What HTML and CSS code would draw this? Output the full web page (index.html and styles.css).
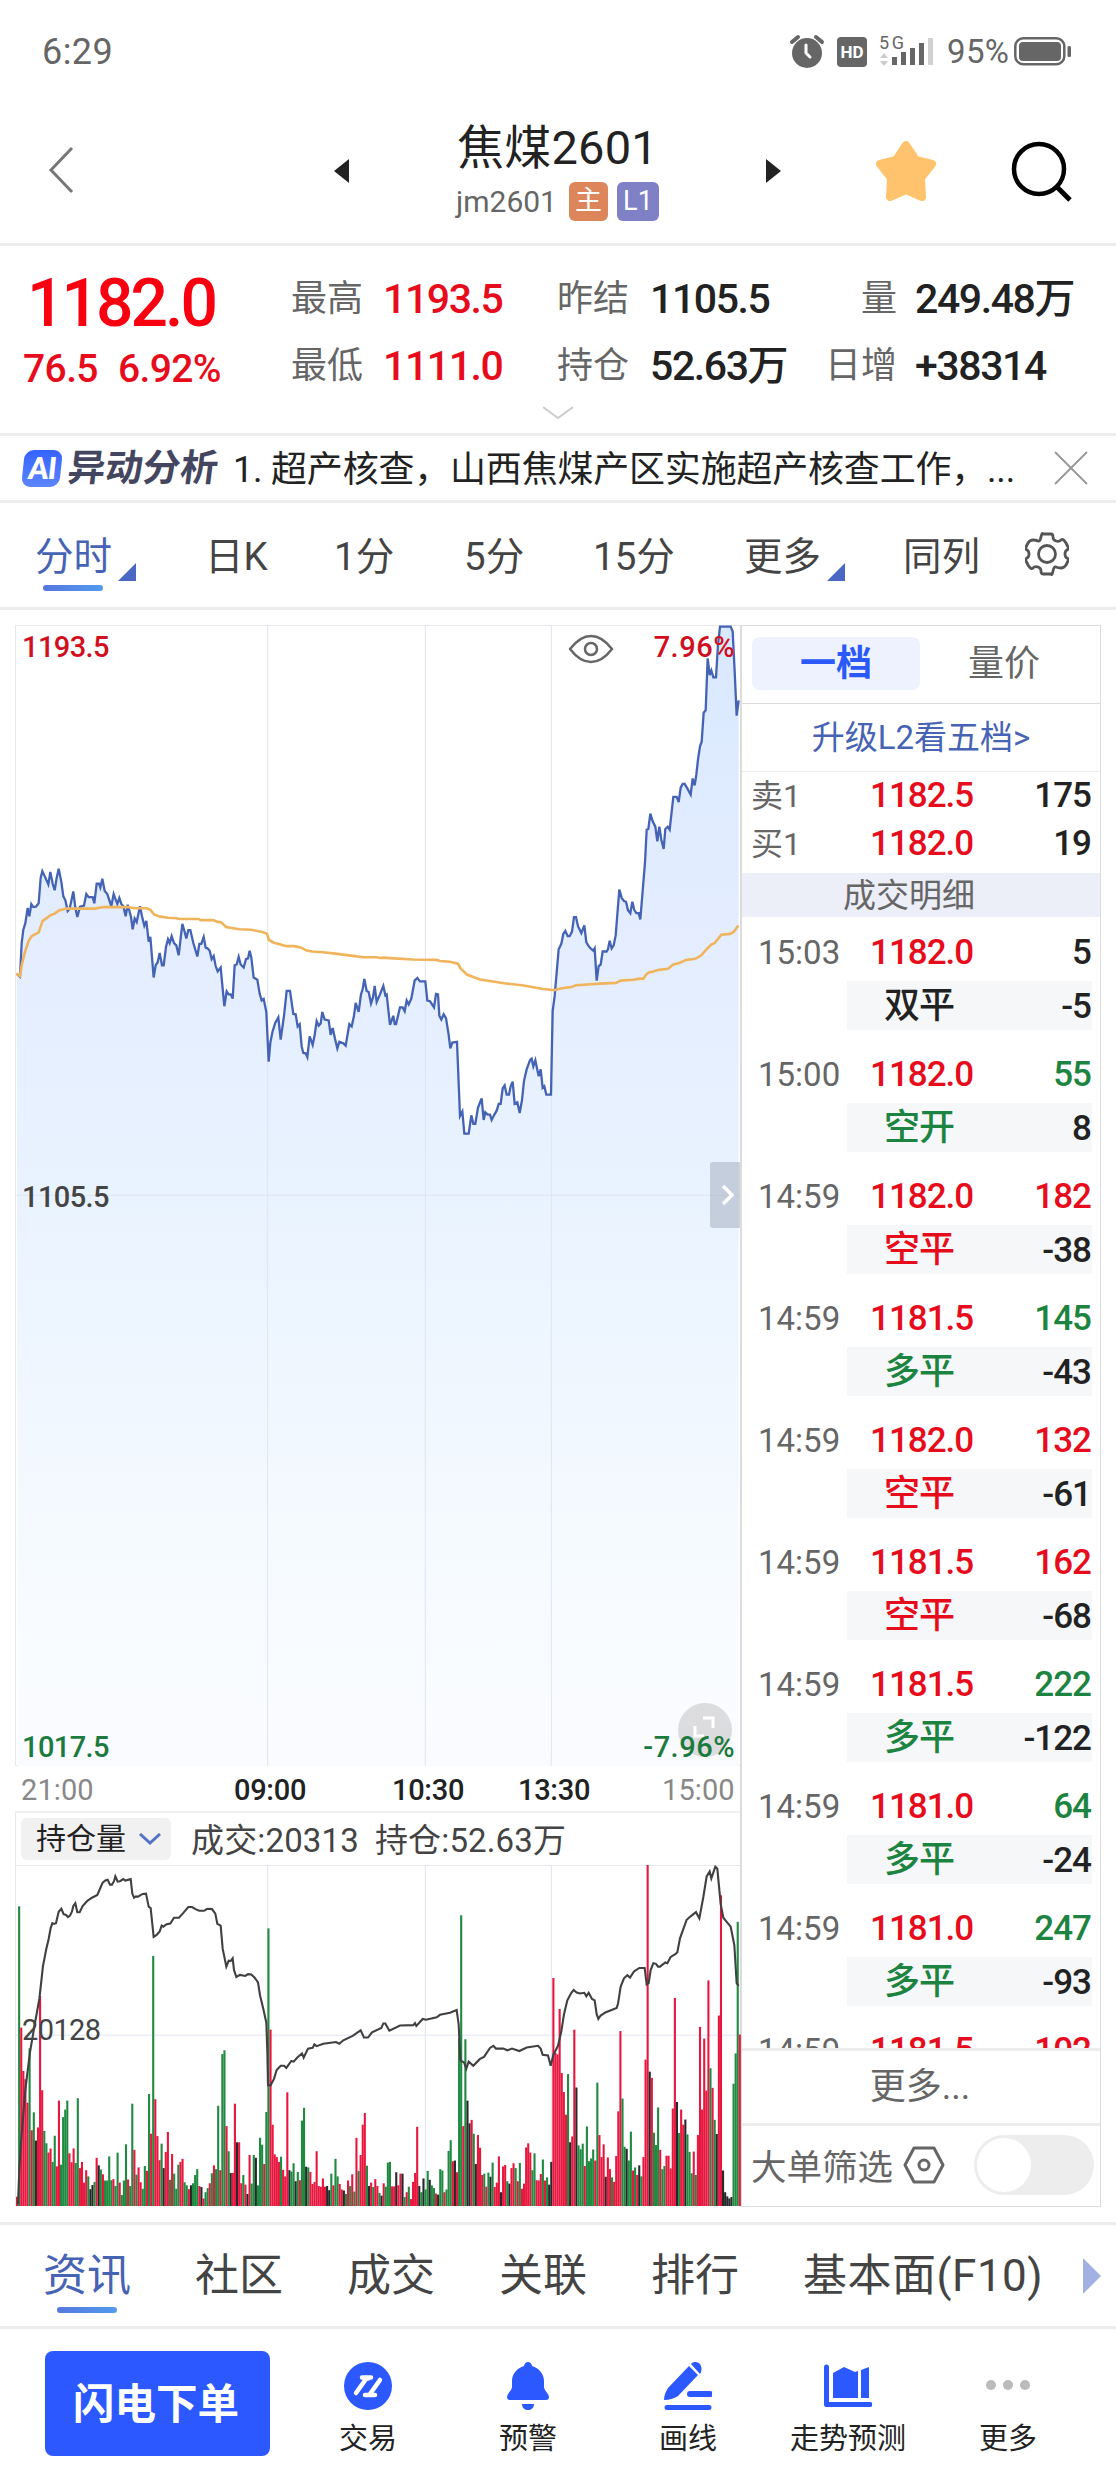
FILE: index.html
```html
<!DOCTYPE html>
<html lang="zh-CN">
<head>
<meta charset="UTF-8">
<meta name="viewport" content="width=device-width, initial-scale=1.0">
<title>焦煤2601</title>
<link rel="stylesheet" href="styles.css">
</head>
<body>
<div class="status">
    <span class="clock">6:29</span>
    <svg class="status-icons" width="292" height="40" viewBox="780 30 292 40">
        <circle cx="807" cy="53" r="15" fill="#666"/>
        <path d="M792 42l6-5M822 42l-6-5" stroke="#666" stroke-width="4" stroke-linecap="round"/>
        <path d="M806 45v8l4 4" fill="none" stroke="#fff" stroke-width="3" stroke-linecap="round"/>
        <rect x="837" y="37" width="30" height="30" rx="4" fill="#666"/>
        <text x="852" y="58" class="hd" text-anchor="middle">HD</text>
        <text x="879" y="49" class="net" textLength="25">5G</text>
        <path d="M880 58l4-5 4 5zM880 61l4 5 4-5z" fill="#ccc"/>
        <path d="M892 57h5v8h-5zM901 52h5v13h-5zM910 48h5v17h-5zM919 43h5v22h-5z" fill="#666"/>
        <path d="M928 38h5v27h-5z" fill="#d0d0d0"/>
        <text x="947" y="63" class="batt" textLength="62">95%</text>
        <rect x="1015.300" y="38.300" width="49" height="26" rx="8" fill="none" stroke="#666" stroke-width="2.500"/>
        <rect x="1019" y="42" width="42" height="19" rx="4" fill="#666"/>
        <rect x="1067.500" y="46" width="3.500" height="11" rx="1.500" fill="#666"/>
    </svg>
</div>

<header class="header">
    <svg class="back" width="26" height="48" viewBox="0 0 26 48"><path d="M24 2L3 24l21 22" fill="none" stroke="#777" stroke-width="3"/></svg>
    <svg class="prev" width="15" height="24" viewBox="0 0 15 24"><path d="M15 0v24L0 12z" fill="#222"/></svg>
    <div class="title">
        <h1>焦煤2601</h1>
        <p>jm2601 <span class="badge main">主</span><span class="badge level">L1</span></p>
    </div>
    <svg class="next" width="15" height="24" viewBox="0 0 15 24"><path d="M0 0v24l15-12z" fill="#222"/></svg>
    <svg class="star" width="60" height="60" viewBox="0 0 60 60"><path d="M30 4L40 19 56 23 45 37 46 56 30 49 14 56 15 37 4 23 20 19z" fill="#ffc36e" stroke="#ffc36e" stroke-width="8" stroke-linejoin="round"/></svg>
    <svg class="search" width="62" height="62" viewBox="0 0 62 62"><circle cx="28" cy="28" r="25" fill="none" stroke="#000" stroke-width="4.500"/><path d="M46 46l13 13" stroke="#000" stroke-width="5"/></svg>
</header>

<section class="quote">
    <div class="last">
        <div class="last-price">1182.0</div>
        <div class="last-change">76.5<span>6.92%</span></div>
    </div>
    <div class="quote-grid">
        <label>最高</label><b class="up">1193.5</b>
        <label>昨结</label><b>1105.5</b>
        <label class="right">量</label><b>249.48<i>万</i></b>
        <label>最低</label><b class="up">1111.0</b>
        <label>持仓</label><b>52.63<i>万</i></b>
        <label class="right">日增</label><b>+38314</b>
    </div>
    <svg class="expand" width="30" height="13" viewBox="0 0 30 13"><path d="M0 1l15 11L30 1" fill="none" stroke="#ccc" stroke-width="2"/></svg>
</section>

<section class="news">
    <span class="ai">AI</span>
    <span class="ai-title">异动分析</span>
    <span class="news-text">1. 超产核查，山西焦煤产区实施超产核查工作，...</span>
    <svg class="close" width="34" height="34" viewBox="0 0 34 34"><path d="M1 1l32 32M33 1L1 33" stroke="#999" stroke-width="2"/></svg>
</section>

<nav class="periods">
    <a class="on corner">分时</a>
    <a>日K</a>
    <a>1分</a>
    <a>5分</a>
    <a>15分</a>
    <a class="corner">更多</a>
    <a>同列</a>
    <svg width="44" height="44" viewBox="0 0 44 44" fill="none" stroke="#555" stroke-width="2.800" stroke-linejoin="round"><path d="M18 2h8q2 0 2 3t3 4 5-1 5 3l2 4q1 2-1 3t-2 4 2 4 1 3l-2 4q-2 3-5 3t-5-1-3 4-2 3h-8q-2 0-2-3t-3-4-5 1-5-3l-2-4q-1-2 1-3t2-4-2-4-1-3l2-4q2-3 5-3t5 1 3-4 2-3z"/><circle cx="22" cy="22" r="8.500"/></svg>
</nav>

<main class="board">
    <div class="charts">
        <div class="price-chart">
            <svg width="726" height="1141" viewBox="45 39 2178 2981" preserveAspectRatio="none">
                <defs>
                    <linearGradient id="fill" x1="0" y1="39" x2="0" y2="3020" gradientUnits="userSpaceOnUse">
                        <stop offset="0" stop-color="#d9e9ff"/>
                        <stop offset="0.220" stop-color="#e2ecff"/>
                        <stop offset="0.500" stop-color="#e9f3ff"/>
                        <stop offset="0.900" stop-color="#f9fcff"/>
                        <stop offset="1" stop-color="#fafbff"/>
                    </linearGradient>
                </defs>
                <path id="priceArea" fill="url(#fill)"/>
                <path class="grid" d="M803 39V3020M1276 39V3020M1654 39V3020M45 1529H2223"/>
                <polyline id="priceLine" class="line price"/>
                <polyline id="avgLine" class="line avg"/>
            </svg>
            <span class="lab up top left">1193.5</span>
            <span class="lab up top right">7.96%</span>
            <span class="lab mid left">1105.5</span>
            <button class="full"><svg width="24" height="24" viewBox="0 0 24 24" fill="none" stroke="#fff" stroke-width="3"><path d="M10 3h10v10M2 11v10h9"/></svg></button>
            <span class="lab down bottom left">1017.5</span>
            <span class="lab down bottom right">-7.96%</span>
            <svg class="eye" width="46" height="32" viewBox="0 0 46 32" fill="none" stroke="#666" stroke-width="2.500"><path d="M2 16Q12 3 23 3t21 13Q34 29 23 29T2 16z" stroke-linejoin="round"/><circle cx="23" cy="16" r="6"/></svg>
            <button class="fold"><svg width="14" height="22" viewBox="0 0 14 22"><path d="M2 2l9 9-9 9" fill="none" stroke="#fff" stroke-width="3.500"/></svg></button>
        </div>
        <div class="times"><span>21:00</span><span>09:00</span><span>10:30</span><span>13:30</span><span>15:00</span></div>
        <div class="indicator">
            <span class="chip">持仓量<svg width="22" height="13" viewBox="0 0 22 13"><path d="M1 1l10 9L21 1" fill="none" stroke="#5573c4" stroke-width="3"/></svg></span>
            <span class="val">成交:20313</span>
            <span class="val">持仓:52.63万</span>
        </div>
        <div class="volume-chart">
            <svg width="726" height="341" viewBox="45 537 2178 990" preserveAspectRatio="none">
                <path class="grid" d="M803 537V1527M1276 537V1527M1654 537V1527M45 1031H2223"/>
                <g id="bars"></g>
                <polyline id="oiLine" class="line oi"/>
            </svg>
            <span class="lab">20128</span>
        </div>
    </div>

    <aside class="side">
        <div class="side-tabs"><a class="on">一档</a><a>量价</a></div>
        <a class="upgrade">升级L2看五档&gt;</a>
        <div class="depth">
            <div><span>卖1</span><b class="up">1182.5</b><b>175</b></div>
            <div><span>买1</span><b class="up">1182.0</b><b>19</b></div>
        </div>
        <div class="band">成交明细</div>
        <div class="ticks" id="ticks"></div>
        <a class="more">更多...</a>
        <div class="filter">
            大单筛选
            <svg width="42" height="38" viewBox="0 0 42 38" fill="none" stroke="#666" stroke-width="3" stroke-linejoin="round"><path d="M11 2h20l9 17-9 17H11L2 19z"/><circle cx="21" cy="19" r="5"/></svg>
            <span class="switch"></span>
        </div>
    </aside>
</main>

<nav class="tabs">
    <a class="on">资讯</a>
    <a>社区</a>
    <a>成交</a>
    <a>关联</a>
    <a>排行</a>
    <a>基本面(F10)</a>
    <svg width="18" height="36" viewBox="0 0 18 36"><path d="M0 0v36l18-18z" fill="#a3b1e2"/></svg>
</nav>

<footer class="toolbar">
    <button class="order">闪电下单</button>
    <a>
        <svg width="48" height="48" viewBox="0 0 48 48"><circle cx="24" cy="24" r="24" fill="#2b59ff"/><path d="M12 31l10-14M18 15.500h9M22 17l3-1M36 18L26 32M21 33h10" fill="none" stroke="#fff" stroke-width="4.500" stroke-linecap="round"/></svg>
        交易
    </a>
    <a>
        <svg width="48" height="48" viewBox="0 0 48 48" fill="#2b59ff"><path d="M24 0c2 0 4 2 4 4 7 2 12 8 12 15v6c0 3 5 7 5 10 0 2-1 3-3 3H6c-2 0-3-1-3-3 0-3 5-7 5-10v-6C8 12 13 6 20 4c0-2 2-4 4-4zM18 42h12c0 4-3 6-6 6s-6-2-6-6z"/></svg>
        预警
    </a>
    <a>
        <svg width="48" height="48" viewBox="0 0 48 48" fill="#2b59ff"><path d="M25 4l9 9-20 21c-3 2-8 4-14 4 0-5 2-9 4-12zM27 2c3-3 7-2 9 0 2 3 2 7 0 10zM26 29h20a2.500 2.500 0 0 1 0 6H26a2.500 2.500 0 0 1 0-6zM3 43h42a2.500 2.500 0 0 1 0 5H3a2.500 2.500 0 0 1 0-5z"/></svg>
        画线
    </a>
    <a>
        <svg width="48" height="48" viewBox="0 0 48 48" fill="#2b59ff"><path d="M2.500 5v37.500H46" fill="none" stroke="#2b59ff" stroke-width="5" stroke-linecap="round" stroke-linejoin="round"/><path d="M9 11l11-6 11 5 3-1v27H9zM37 8l8-3v31h-8z"/></svg>
        走势预测
    </a>
    <a>
        <svg width="48" height="48" viewBox="0 0 48 48" fill="#bbb"><circle cx="7" cy="23" r="5"/><circle cx="24" cy="23" r="5"/><circle cx="41" cy="23" r="5"/></svg>
        更多
    </a>
</footer>
<script src="script.js"></script>
</body>
</html>
```
FILE: styles.css
```css
* {
    box-sizing: border-box;
}
body {
    margin: 0;
    width: 1116px;
    background: #fff;
    color: #222;
    font-family: Roboto, "Noto Sans CJK SC", sans-serif;
}
h1, p {
    margin: 0;
    font-weight: 400;
}
a, button, label {
    display: block;
}
svg {
    display: block;
    flex: none;
}
button {
    border: 0;
    padding: 0;
    font-family: inherit;
}
b {
    font-weight: 500;
}
.up {
    color: #e60c1c;
}
.down {
    color: #1c8440;
}

/* status bar */
.status {
    display: flex;
    justify-content: space-between;
    height: 100px;
    padding: 30px 44px 0 42px;
}
.clock {
    font-size: 36px;
    line-height: 44px;
    letter-spacing: 0.400px;
    color: #666;
}
.status-icons text {
    fill: #666;
}
.status-icons .hd {
    font-size: 17px;
    font-weight: 700;
    fill: #fff;
}
.status-icons .net {
    font-size: 18px;
}
.status-icons .batt {
    font-size: 33px;
}

/* title bar */
.header {
    display: flex;
    height: 146px;
    border-bottom: 3px solid #ededed;
    padding-left: 48px;
}
.back {
    margin-top: 46px;
}
.prev {
    margin: 59px 0 0 260px;
}
.title {
    width: 417px;
    padding-top: 21px;
    text-align: center;
}
.title h1 {
    font-size: 47px;
    line-height: 54px;
    letter-spacing: 0.2px;
}
.title p {
    display: flex;
    justify-content: center;
    align-items: center;
    height: 39px;
    margin-top: 7px;
    font-size: 30px;
    color: #666;
}
.badge {
    height: 39px;
    border-radius: 6px;
    font-size: 27px;
    line-height: 39px;
    color: #fff;
}
.badge.main {
    width: 39px;
    margin-left: 12px;
    background: #dd865c;
}
.badge.level {
    width: 42px;
    margin-left: 9px;
    background: #8080c6;
}
.next {
    margin-top: 59px;
}
.star {
    margin: 41px 0 0 95px;
}
.search {
    margin: 41px 0 0 75px;
}

/* quote */
.quote {
    position: relative;
    display: flex;
    height: 190px;
    padding-top: 20px;
    border-bottom: 3px solid #ededed;
}
.last {
    width: 292px;
    font-weight: 500;
    color: #f8000f;
}
.last-price {
    padding-left: 27px;
    font-size: 66px;
    line-height: 75px;
    letter-spacing: -3px;
}
.last-change {
    padding-left: 23px;
    font-size: 39px;
    line-height: 56px;
    letter-spacing: -0.600px;
    color: #e60c1c;
}
.last-change span {
    margin-left: 20px;
}
.quote-grid {
    display: grid;
    grid-template-columns: 91px 175px 92px 158px 89px 1fr;
    grid-auto-rows: 67px;
    flex: 1;
    line-height: 67px;
}
.quote-grid label {
    font-size: 36px;
    color: #666;
    margin-left: -1px;
}
.quote-grid label.right {
    text-align: right;
    margin: 0;
}
.quote-grid b {
    font-size: 41px;
    letter-spacing: -1.400px;
}
.quote-grid .right + b {
    padding-left: 18px;
}
.quote-grid i {
    font-style: normal;
    font-size: 41px;
}
.expand {
    position: absolute;
    left: 543px;
    bottom: 14px;
}

/* news line */
.news {
    display: flex;
    align-items: center;
    height: 67px;
    padding-left: 23px;
    border-bottom: 3px solid #ededed;
}
.ai {
    width: 38px;
    height: 37px;
    border-radius: 9px;
    background: linear-gradient(#3562ff, #5c86ff);
    color: #fff;
    font-size: 31px;
    font-weight: 700;
    line-height: 37px;
    letter-spacing: -1px;
    text-align: center;
    transform: skewX(-6deg);
}
.ai-title {
    width: 165px;
    margin-left: 7px;
    font-size: 37.500px;
    font-weight: 700;
    line-height: 50px;
    color: #44465f;
    transform: skewX(-7deg);
}
.news-text {
    width: 821px;
    margin-top: 4px;
    font-size: 36px;
    line-height: 50px;
    letter-spacing: -0.200px;
    white-space: nowrap;
}

/* period tabs */
.periods {
    position: relative;
    display: flex;
    height: 107px;
    padding: 28px 0 0 35px;
    border-bottom: 3px solid #ededed;
    font-size: 38.500px;
    line-height: 52px;
    color: #444;
}
.periods a {
    position: relative;
    margin-right: 55px;
    white-space: nowrap;
}
.periods a:nth-child(1) { width: 115px; }
.periods a:nth-child(2) { width: 74px; }
.periods a:nth-child(3) { width: 75px; }
.periods a:nth-child(4) { width: 74px; }
.periods a:nth-child(5) { width: 96px; }
.periods a:nth-child(6) { width: 104px; }
.periods a:nth-child(7) { width: 76px; margin-right: 46px; }
.periods a.on {
    color: #4663b4;
}
.periods a.on::before {
    content: "";
    position: absolute;
    left: 8px;
    top: 54px;
    width: 60px;
    height: 6px;
    border-radius: 3px;
    background: linear-gradient(90deg, #5577e0, #529bee);
}
.corner::after {
    content: "";
    position: absolute;
    left: 83px;
    top: 32px;
    border-left: 18px solid transparent;
    border-bottom: 18px solid #4a67c4;
}
.periods svg {
    margin-top: 1px;
}

/* charts */
.board {
    display: flex;
    padding: 15px 0 0 15px;
    height: 1612px;
}
.charts {
    width: 725px;
}
.price-chart, .volume-chart {
    position: relative;
    border-top: 1px solid #e6e8ec;
    border-left: 1px solid #e6e8ec;
}
.price-chart {
    height: 1141px;
    border-bottom: 1px solid #e6e8ec;
}
.price-chart > svg:first-child, .volume-chart > svg {
    margin: -1px 0 0 -1px;
}
.grid {
    fill: none;
    stroke: #dfe5ee;
    stroke-width: 1;
    vector-effect: non-scaling-stroke;
}
.line {
    fill: none;
    stroke-width: 2.300;
    vector-effect: non-scaling-stroke;
}
.line.price { stroke: #4463b5; }
.line.avg { stroke: #f0b45c; stroke-width: 2.600; }
.line.oi { stroke: #404040; stroke-width: 2.100; }
.lab {
    position: absolute;
    font-size: 29px;
    font-weight: 500;
    line-height: 30px;
    letter-spacing: -0.600px;
    color: #444;
}
.lab.up { color: #d0101f; }
.lab.down { color: #1c7a3e; }
.lab.top { top: 6px; }
.lab.mid { top: 556px; }
.lab.bottom { bottom: 3px; }
.lab.left { left: 6px; }
.lab.right { right: 5px; letter-spacing: 0.500px; }
.eye {
    position: absolute;
    left: 552px;
    top: 7px;
}
.fold {
    position: absolute;
    right: 0;
    top: 536px;
    width: 30px;
    height: 66px;
    padding-left: 11px;
    border-radius: 3px 0 0 3px;
    background: rgba(160, 170, 185, 0.5);
}
.full {
    position: absolute;
    left: 662px;
    bottom: 8px;
    width: 54px;
    height: 54px;
    padding: 0 0 6px 15px;
    border-radius: 50%;
    background: rgba(200, 200, 200, 0.6);
}
.times {
    position: relative;
    display: flex;
    height: 45px;
    padding-left: 6px;
    font-size: 29px;
    font-weight: 500;
    line-height: 49px;
    letter-spacing: -0.300px;
}
.times span:nth-child(1) { width: 213px; }
.times span:nth-child(2) { width: 158px; }
.times span:nth-child(3) { width: 126px; }
.times span:nth-child(4) { width: 144px; }
.times span:first-child, .times span:last-child {
    font-weight: 400;
    letter-spacing: 0.100px;
    color: #888;
}
.indicator {
    display: flex;
    align-items: center;
    height: 54px;
    padding-left: 5px;
    border-top: 2px solid #f0f0f0;
    border-left: 1px solid #e6e8ec;
}
.chip {
    display: flex;
    align-items: center;
    width: 150px;
    height: 42px;
    padding-left: 15px;
    border-radius: 6px;
    background: #f1f1f2;
    font-size: 30px;
    line-height: 40px;
}
.chip svg {
    margin-left: 13px;
}
.val {
    margin: -3px 0 0 20px;
    font-size: 33px;
    letter-spacing: 0.150px;
    color: #444;
}
.val + .val {
    margin-left: 16px;
}
.volume-chart {
    height: 341px;
}
.volume-chart .lab {
    left: 6px;
    top: 149px;
    font-weight: 400;
}

/* side panel */
.side {
    width: 361px;
    height: 1582px;
    border: 1px solid #dcdcdc;
    border-left-width: 2px;
    color: #666;
}
.side-tabs {
    display: flex;
    height: 78px;
    padding: 11px 10px;
    border-bottom: 1px solid #dcdcdc;
    font-size: 36px;
    line-height: 54px;
    text-align: center;
}
.side-tabs a {
    width: 168px;
    height: 53px;
}
.side-tabs .on {
    border-radius: 8px;
    background: #eef2ff;
    color: #2b59f8;
    font-weight: 700;
}
.upgrade {
    height: 68px;
    border-bottom: 1px solid #ececec;
    font-size: 33px;
    line-height: 68px;
    color: #4663b4;
    text-align: center;
}
.depth {
    height: 101px;
    line-height: 48px;
}
.depth div, .tick-top, .tick-sub {
    display: flex;
}
.depth span {
    width: 128px;
    padding-left: 9px;
    font-size: 32px;
}
.depth b, .ticks b {
    width: 110px;
    font-size: 35px;
    letter-spacing: -1px;
}
.depth b:last-child, .ticks b:last-child {
    flex: 1;
    padding-right: 9px;
    text-align: right;
}
.depth b:not(.up), .ticks .flat {
    color: #222;
}
.band {
    height: 44px;
    padding-left: 101px;
    background: #eceef8;
    font-size: 33px;
    line-height: 45px;
}
.ticks {
    height: 1131px;
    overflow: hidden;
}
.tick {
    height: 122px;
    padding-top: 7px;
}
.tick span {
    width: 128px;
    padding-left: 16px;
    font-size: 33px;
    line-height: 57px;
}
.tick-top b {
    line-height: 57px;
}
.tick-sub {
    height: 49px;
    margin: 0 8px 0 105px;
    padding-left: 37px;
    background: #f5f7f9;
    line-height: 51px;
}
.ticks .tick-sub b {
    font-size: 36px;
}
.ticks .tick-sub b:last-child {
    font-size: 35px;
    padding-right: 1px;
}
.ticks .green { color: #1c8440; }
.more {
    height: 78px;
    border-top: 3px solid #ededed;
    border-bottom: 3px solid #ededed;
    font-size: 36px;
    line-height: 73px;
    text-align: center;
    padding-right: 2px;
}
.filter {
    display: flex;
    align-items: center;
    height: 79px;
    padding: 0 0 2px 9px;
    font-size: 35.500px;
}
.filter svg {
    margin-left: 10px;
}
.switch {
    width: 120px;
    height: 60px;
    margin-left: 29px;
    padding: 3px;
    border-radius: 30px;
    background: #ededed;
}
.switch::before {
    content: "";
    display: block;
    width: 54px;
    height: 54px;
    border-radius: 50%;
    background: #fff;
}

/* bottom */
.tabs {
    display: flex;
    align-items: flex-start;
    height: 107px;
    padding: 20px 0 0 43px;
    border-top: 3px solid #ededed;
    border-bottom: 3px solid #ededed;
    font-size: 44px;
    line-height: 62px;
    color: #444;
}
.tabs a {
    position: relative;
    width: 88px;
    margin-right: 64px;
    white-space: nowrap;
}
.tabs a:nth-child(6) {
    width: 240px;
    margin-right: 40px;
    letter-spacing: 0.500px;
}
.tabs .on {
    color: #4663b4;
}
.tabs .on::after {
    content: "";
    position: absolute;
    left: 14px;
    top: 62px;
    width: 60px;
    height: 6px;
    border-radius: 3px;
    background: linear-gradient(90deg, #5577e0, #529bee);
}
.tabs svg {
    margin-top: 13px;
}
.toolbar {
    display: flex;
    height: 150px;
    padding: 22px 0 0 45px;
}
.order {
    width: 225px;
    height: 105px;
    margin-right: 18px;
    padding: 0 3px 5px 0;
    border-radius: 8px;
    background: #2b59ff;
    color: #fff;
    font-size: 41.500px;
    font-weight: 700;
}
.toolbar a {
    display: flex;
    flex-direction: column;
    align-items: center;
    width: 160px;
    padding-top: 11px;
    font-size: 29px;
    line-height: 42px;
    white-space: nowrap;
}
.toolbar a svg {
    margin-bottom: 8px;
}
```
FILE: script.js
```js
// minute price, x/y in chart units
var price = "50,950 60,958 65,870 70,835 76,818 83,778 88,800 94,768 100,776 108,775 116,766 122,700 127,682 135,697 145,717 151,684 158,715 164,732 170,700 176,676 184,710 190,748 196,758 203,786 209,780 220,735 226,778 232,802 240,775 252,772 259,742 266,750 278,750 283,766 290,715 297,715 301,725 307,702 314,734 322,742 334,774 341,742 352,768 358,752 364,768 370,774 377,800 383,770 388,785 393,802 398,834 404,806 410,815 420,774 426,800 433,825 439,812 446,866 451,854 461,960 467,928 473,920 479,896 486,928 491,928 498,880 504,860 509,870 515,852 522,870 529,876 536,902 547,820 553,838 559,858 565,836 571,836 580,870 592,905 598,872 604,872 611,854 617,882 623,884 629,890 635,912 641,904 647,930 653,944 662,934 673,1035 680,996 686,1004 692,1004 698,1015 704,928 710,926 716,906 722,926 731,934 738,912 744,910 749,890 754,908 761,960 772,966 779,1002 785,1020 791,1016 799,1050 806,1180 811,1130 818,1100 826,1078 835,1064 842,1122 852,1060 860,995 870,995 880,1055 887,1056 893,1088 899,1082 905,1140 910,1157 917,1158 922,1168 929,1114 938,1136 944,1110 950,1074 956,1086 962,1080 967,1050 974,1070 986,1072 992,1110 998,1092 1005,1120 1012,1145 1018,1128 1030,1132 1037,1138 1048,1082 1055,1088 1062,1060 1067,1026 1076,1050 1083,1004 1088,990 1093,964 1100,995 1106,998 1113,1028 1119,1012 1124,982 1130,1024 1140,1004 1150,982 1156,1006 1160,1004 1170,1084 1180,1060 1184,1082 1188,1082 1200,1038 1208,1038 1214,1048 1220,1020 1226,1030 1234,1015 1244,968 1252,961 1260,970 1276,970 1282,1020 1290,1022 1302,1038 1308,1003 1314,1004 1318,1060 1324,1070 1331,1056 1338,1066 1346,1110 1351,1145 1357,1130 1371,1128 1380,1322 1387,1310 1393,1368 1406,1368 1414,1320 1420,1342 1426,1342 1434,1300 1445,1276 1451,1332 1456,1312 1463,1318 1470,1318 1475,1332 1483,1318 1490,1308 1496,1290 1502,1290 1508,1250 1514,1242 1520,1266 1527,1266 1532,1244 1538,1232 1544,1290 1552,1286 1559,1314 1566,1280 1572,1230 1580,1200 1590,1176 1595,1172 1600,1192 1606,1176 1616,1218 1622,1200 1628,1248 1633,1244 1639,1266 1653,1266 1658,1048 1664,1008 1676,886 1684,872 1690,846 1696,838 1703,852 1709,852 1716,840 1722,802 1728,802 1734,826 1744,844 1753,824 1759,868 1766,878 1772,884 1780,890 1784,884 1790,968 1796,930 1802,926 1808,892 1820,892 1824,886 1829,864 1835,884 1841,876 1847,850 1858,730 1865,752 1872,760 1878,762 1884,784 1891,792 1897,762 1903,784 1909,792 1916,792 1921,808 1928,734 1935,660 1940,574 1945,572 1951,532 1958,552 1966,566 1972,604 1978,566 1984,600 1991,624 1996,572 2003,566 2009,574 2020,488 2030,488 2036,502 2042,464 2048,454 2054,454 2062,466 2072,482 2078,440 2084,458 2089,430 2094,390 2100,356 2105,344 2111,268 2117,262 2123,126 2129,170 2134,158 2140,176 2148,176 2154,90 2160,43 2192,43 2198,56 2204,160 2210,276 2216,236";

var avg = "50,950 60,956 66,924 75,893 86,864 95,852 116,842 128,812 152,797 164,793 178,784 200,780 284,780 310,776 384,776 404,779 440,779 452,784 462,795 480,801 504,804 530,805 538,807 596,807 602,810 640,810 650,814 664,816 678,828 718,834 754,835 790,842 801,846 807,862 822,869 860,878 884,878 904,882 918,889 936,892 968,894 1000,897 1064,904 1090,907 1130,907 1140,909 1150,908 1182,910 1240,913 1310,914 1320,917 1350,919 1374,924 1382,937 1402,953 1440,965 1512,975 1566,980 1630,990 1662,993 1686,988 1714,985 1728,980 1800,976 1848,974 1862,968 1900,966 1920,963 1930,963 1938,953 1946,947 1960,944 1976,940 2004,937 2020,926 2038,922 2058,914 2086,911 2104,902 2120,886 2134,874 2144,870 2164,848 2190,846 2202,840 2215,824";

var oi = "54,1522 58,1420 64,1330 76,1190 90,1080 106,990 118,926 129,830 139,780 146,752 152,720 157,706 162,708 168,706 176,673 184,664 191,680 198,682 204,688 210,684 216,672 220,656 226,648 232,674 239,674 248,656 262,641 276,632 292,624 300,606 308,588 316,582 323,580 330,594 336,594 342,584 346,570 353,585 360,584 370,578 376,582 392,578 397,620 402,632 408,628 414,629 428,621 438,620 446,658 452,662 461,746 470,740 479,730 485,713 490,716 500,709 511,707 522,690 530,690 537,690 550,676 565,659 576,659 588,666 598,670 612,670 622,664 636,665 646,678 652,708 662,713 668,780 679,832 686,815 692,816 698,808 702,842 709,862 720,856 736,859 744,854 754,855 764,864 774,878 780,915 790,955 799,995 802,1080 804,1176 812,1176 822,1158 830,1132 842,1120 852,1120 859,1126 874,1106 881,1108 892,1096 906,1084 911,1096 924,1070 938,1068 943,1058 950,1063 970,1056 1008,1051 1018,1056 1030,1046 1058,1033 1082,1017 1092,1038 1104,1038 1116,1023 1144,1010 1150,997 1156,997 1168,1018 1200,1003 1240,1002 1245,996 1249,1004 1268,984 1278,986 1310,979 1320,972 1350,966 1370,958 1376,1000 1381,1104 1392,1110 1399,1128 1406,1108 1420,1120 1440,1100 1452,1094 1470,1068 1480,1062 1488,1070 1510,1070 1522,1075 1536,1070 1558,1077 1580,1067 1614,1062 1622,1070 1628,1088 1644,1090 1652,1120 1660,1088 1674,1062 1684,1020 1692,970 1702,930 1714,908 1721,900 1730,907 1740,910 1753,908 1759,918 1766,908 1776,926 1784,930 1790,970 1795,984 1802,974 1816,965 1850,952 1854,940 1862,890 1872,866 1882,857 1890,864 1902,846 1918,836 1934,836 1940,884 1946,880 1952,842 1960,822 1968,824 1974,832 1980,832 1996,820 2002,822 2012,804 2026,796 2032,790 2040,750 2060,696 2072,686 2088,674 2098,692 2110,630 2120,570 2129,556 2134,576 2146,542 2152,548 2162,650 2170,690 2180,702 2192,716 2203,770 2210,880 2216,888";

// volume bars: colour (r / g / k) + height
var volume = "r27 g870 r518 r392 r368 r300 g458 r220 g272 k190 r228 r610 r336 g218 g182 r155 r167 g128 g204 r115 r306 g120 g258 g280 g306 r153 r127 r167 g125 g313 r110 r128 r68 r104 g86 k49 k61 g70 r140 k118 g106 r92 g74 g74 g144 g75 r78 g58 g155 r68 g32 g74 g179 r77 g58 g297 r163 g91 r112 r69 g50 g116 r102 g325 r210 g726 r310 r203 r133 g181 k110 r157 r215 g76 r151 g94 g50 g120 r128 r137 g69 g60 r49 k60 g66 g90 g107 r58 k55 r22 g40 g52 r66 g95 r118 g107 g291 r104 g441 g452 r232 g159 k96 r96 r297 k185 r185 r66 g90 r62 k35 r148 g65 g148 k140 g60 g198 g178 r122 g273 g806 r512 r236 r150 r142 r128 g143 r105 r86 r330 k104 g100 g124 k72 g99 r75 g248 g285 k114 g112 r99 r64 r70 r159 r58 r56 r80 r56 k58 k46 g94 r60 g137 g86 r64 r48 k45 g35 r74 g58 r92 g42 r198 g102 r148 r236 r270 g117 k58 r68 g55 r78 r58 g38 k30 r66 g56 g126 g128 r57 r57 k98 r60 r94 k94 g26 r40 g56 r20 r70 r96 r230 k58 g40 k80 g48 g102 k76 g60 g52 r36 k33 g107 g103 r40 g48 g160 g191 r130 k132 r98 g486 g844 r232 g484 k306 k240 r250 g210 k122 r206 r169 r90 g94 r56 g97 k85 g126 r55 r68 r144 k40 r115 r119 g72 k65 r110 r124 g110 r72 g125 r50 r65 r170 r182 r155 g104 g153 r75 r74 r93 g135 r74 g83 k62 k128 r662 r445 r440 r572 r386 r331 r265 g383 k185 r202 r512 k344 g176 g165 g181 r116 g231 g130 g138 g164 r132 g358 r206 r142 r179 k85 r141 r107 g83 r70 r145 r275 r508 g312 g172 k166 g132 g216 r103 g112 r90 k118 g86 r142 r425 r990 k390 r372 g213 g177 g286 r163 g107 g116 r146 r146 r109 r283 r604 k302 g212 r280 r236 k251 g208 g157 g95 r158 g90 r206 r520 r280 r486 r335 r655 g400 r343 g250 k209 r553 r902 k103 k40 k28 k22 k26 g355 g443 g825 r498".split(" ");

// time, price, volume, volume colour, type, type colour, position change
var ticks = [
    ["15:03", "1182.0", 5, "flat", "双平", "flat", "-5"],
    ["15:00", "1182.0", 55, "green", "空开", "green", "8"],
    ["14:59", "1182.0", 182, "up", "空平", "up", "-38"],
    ["14:59", "1181.5", 145, "green", "多平", "green", "-43"],
    ["14:59", "1182.0", 132, "up", "空平", "up", "-61"],
    ["14:59", "1181.5", 162, "up", "空平", "up", "-68"],
    ["14:59", "1181.5", 222, "green", "多平", "green", "-122"],
    ["14:59", "1181.0", 64, "green", "多平", "green", "-24"],
    ["14:59", "1181.0", 247, "green", "多平", "green", "-93"],
    ["14:59", "1181.5", 102, "up"]
];

document.getElementById("priceLine").setAttribute("points", price);
document.getElementById("priceArea").setAttribute("d", "M54,3020 L" + price + " L2216,3020 Z");
document.getElementById("avgLine").setAttribute("points", avg);
document.getElementById("oiLine").setAttribute("points", oi);

var colors = { r: "#e8173f", g: "#1f8a40", k: "#26292a" };
var html = "";
volume.forEach(function (v, i) {
    var h = +v.slice(1);
    html += '<rect x="' + (48 + i * 6.285).toFixed(1) + '" y="' + (1527 - h) + '" width="6.300" height="' + h + '" fill="' + colors[v[0]] + '"/>';
});
document.getElementById("bars").innerHTML = html;

document.getElementById("ticks").innerHTML = ticks.map(function (t) {
    var row = '<div class="tick"><div class="tick-top"><span>' + t[0] + '</span><b class="up">' + t[1] +
        '</b><b class="' + t[3] + '">' + t[2] + '</b></div>';
    if (t[4]) {
        row += '<div class="tick-sub"><b class="' + t[5] + '">' + t[4] + '</b><b class="flat">' + t[6] + '</b></div>';
    }
    return row + '</div>';
}).join("");
```
